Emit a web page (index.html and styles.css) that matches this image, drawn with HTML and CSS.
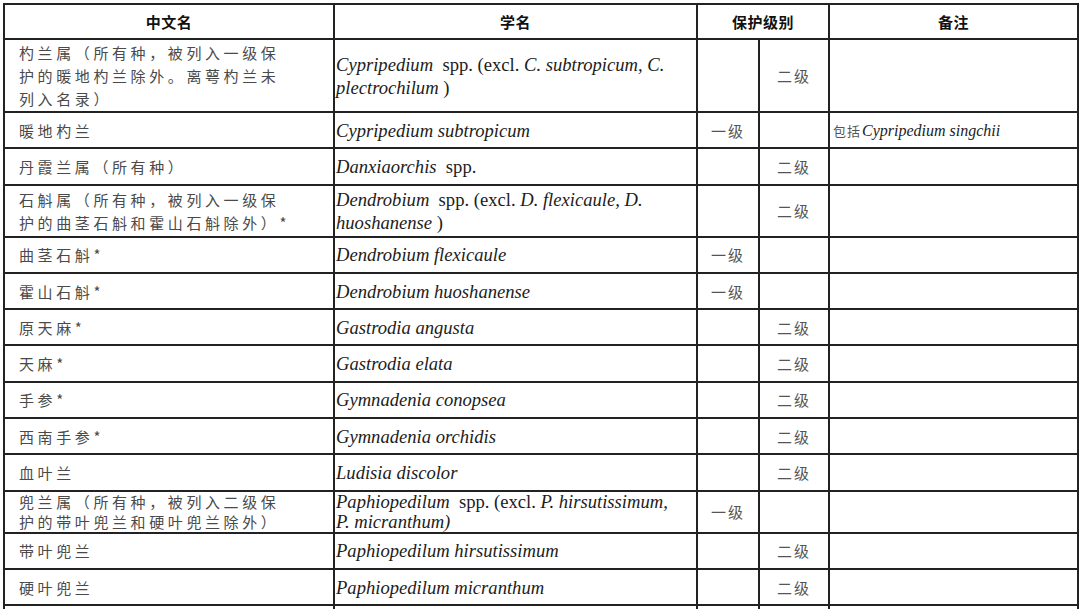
FILE: index.html
```html
<!DOCTYPE html>
<html lang="zh-CN">
<head>
<meta charset="utf-8">
<title>兰科保护名录</title>
<link rel="stylesheet" href="styles.css">
</head>
<body>
<div class="page">
<table class="list">
  <colgroup>
    <col class="c-cn"><col class="c-sci"><col class="c-l1"><col class="c-l2"><col class="c-note">
  </colgroup>
  <thead>
    <tr class="head">
      <th>中文名</th>
      <th>学名</th>
      <th colspan="2">保护级别</th>
      <th>备注</th>
    </tr>
  </thead>
  <tbody>
    <tr class="h3">
      <td class="cn">杓兰属（所有种，被列入一级保<br>护的暖地杓兰除外。离萼杓兰未<br>列入名录）</td>
      <td class="sci"><i>Cypripedium</i>&nbsp; spp. (excl. <i>C. subtropicum, C.</i><br><i>plectrochilum</i> )</td>
      <td class="lv"></td>
      <td class="lv">二级</td>
      <td class="note"></td>
    </tr>
    <tr class="h1">
      <td class="cn">暖地杓兰</td>
      <td class="sci"><i>Cypripedium subtropicum</i></td>
      <td class="lv">一级</td>
      <td class="lv"></td>
      <td class="note"><span class="note-cn">包括</span><i>Cypripedium singchii</i></td>
    </tr>
    <tr class="h1">
      <td class="cn">丹霞兰属（所有种）</td>
      <td class="sci"><i>Danxiaorchis</i>&nbsp; spp.</td>
      <td class="lv"></td>
      <td class="lv">二级</td>
      <td class="note"></td>
    </tr>
    <tr class="h2">
      <td class="cn">石斛属（所有种，被列入一级保<br>护的曲茎石斛和霍山石斛除外）*</td>
      <td class="sci"><i>Dendrobium</i>&nbsp; spp. (excl. <i>D. flexicaule, D.</i><br><i>huoshanense</i> )</td>
      <td class="lv"></td>
      <td class="lv">二级</td>
      <td class="note"></td>
    </tr>
    <tr class="h1">
      <td class="cn">曲茎石斛*</td>
      <td class="sci"><i>Dendrobium flexicaule</i></td>
      <td class="lv">一级</td>
      <td class="lv"></td>
      <td class="note"></td>
    </tr>
    <tr class="h1">
      <td class="cn">霍山石斛*</td>
      <td class="sci"><i>Dendrobium huoshanense</i></td>
      <td class="lv">一级</td>
      <td class="lv"></td>
      <td class="note"></td>
    </tr>
    <tr class="h1">
      <td class="cn">原天麻*</td>
      <td class="sci"><i>Gastrodia angusta</i></td>
      <td class="lv"></td>
      <td class="lv">二级</td>
      <td class="note"></td>
    </tr>
    <tr class="h1">
      <td class="cn">天麻*</td>
      <td class="sci"><i>Gastrodia elata</i></td>
      <td class="lv"></td>
      <td class="lv">二级</td>
      <td class="note"></td>
    </tr>
    <tr class="h1">
      <td class="cn">手参*</td>
      <td class="sci"><i>Gymnadenia conopsea</i></td>
      <td class="lv"></td>
      <td class="lv">二级</td>
      <td class="note"></td>
    </tr>
    <tr class="h1">
      <td class="cn">西南手参*</td>
      <td class="sci"><i>Gymnadenia orchidis</i></td>
      <td class="lv"></td>
      <td class="lv">二级</td>
      <td class="note"></td>
    </tr>
    <tr class="h1">
      <td class="cn">血叶兰</td>
      <td class="sci"><i>Ludisia discolor</i></td>
      <td class="lv"></td>
      <td class="lv">二级</td>
      <td class="note"></td>
    </tr>
    <tr class="h2s">
      <td class="cn">兜兰属（所有种，被列入二级保<br>护的带叶兜兰和硬叶兜兰除外）</td>
      <td class="sci"><i>Paphiopedilum</i>&nbsp; spp. (excl. <i>P. hirsutissimum,</i><br><i>P. micranthum)</i></td>
      <td class="lv">一级</td>
      <td class="lv"></td>
      <td class="note"></td>
    </tr>
    <tr class="h1">
      <td class="cn">带叶兜兰</td>
      <td class="sci"><i>Paphiopedilum hirsutissimum</i></td>
      <td class="lv"></td>
      <td class="lv">二级</td>
      <td class="note"></td>
    </tr>
    <tr class="h1">
      <td class="cn">硬叶兜兰</td>
      <td class="sci"><i>Paphiopedilum micranthum</i></td>
      <td class="lv"></td>
      <td class="lv">二级</td>
      <td class="note"></td>
    </tr>
    <tr class="h1">
      <td class="cn"></td>
      <td class="sci"></td>
      <td class="lv"></td>
      <td class="lv"></td>
      <td class="note"></td>
    </tr>
  </tbody>
</table>
</div>
</body>
</html>
```

FILE: styles.css
```css
html, body {
  margin: 0;
  padding: 0;
  background: #ffffff;
}

.page {
  padding: 3px 0 0 3px;
}

.list {
  border-collapse: collapse;
  table-layout: fixed;
  width: 1074px;
}

.c-cn { width: 330px; }
.c-sci { width: 363px; }
.c-l1 { width: 62px; }
.c-l2 { width: 70px; }
.c-note { width: 249px; }

.list th,
.list td {
  border: 2px solid #222222;
  padding: 0;
  vertical-align: middle;
}

.head { height: 35px; }
.h1 { height: 36.3px; }
.h2 { height: 52px; }
.h2s { height: 42px; }
.h3 { height: 73px; }

.list th {
  font-family: "Noto Sans CJK SC", "Noto Sans", sans-serif;
  font-weight: 700;
  font-size: 15px;
  color: #111111;
  text-align: center;
  letter-spacing: 0.5px;
}

.cn {
  font-family: "Noto Sans CJK SC", sans-serif;
  font-weight: 400;
  font-size: 15px;
  line-height: 23px;
  letter-spacing: 3.6px;
  color: #4a4a4a;
  padding-left: 14px !important;
  white-space: nowrap;
}

.sci {
  font-family: "Liberation Serif", "Times New Roman", serif;
  font-size: 18.6px;
  line-height: 23px;
  color: #1c1c1c;
  padding-left: 1px !important;
  white-space: nowrap;
}

.h2s .cn,
.h2s .sci {
  line-height: 20px;
}

.lv {
  font-family: "Noto Sans CJK SC", sans-serif;
  font-size: 15px;
  letter-spacing: 2px;
  color: #555555;
  text-align: center;
}

.note {
  font-family: "Liberation Serif", "Times New Roman", serif;
  font-size: 16px;
  color: #1c1c1c;
  padding-left: 3px !important;
  white-space: nowrap;
}

.note-cn {
  font-family: "Noto Sans CJK SC", sans-serif;
  font-size: 13px;
  color: #555555;
  letter-spacing: 1px;
  margin-right: 1px;
}
```
